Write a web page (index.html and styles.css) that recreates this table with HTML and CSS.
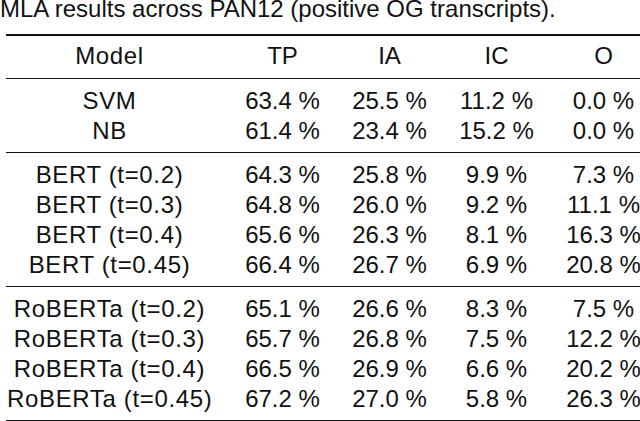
FILE: index.html
```html
<!DOCTYPE html>
<html lang="en">
<head>
<meta charset="utf-8">
<title>MLA results across PAN12</title>
<link rel="stylesheet" href="styles.css">
</head>
<body>
<div class="page">
  <p class="caption">MLA results across PAN12 (positive OG transcripts).</p>
  <table class="results">
    <colgroup>
      <col class="c-model">
      <col class="c-num">
      <col class="c-num">
      <col class="c-num">
      <col class="c-num">
    </colgroup>
    <thead>
      <tr><th class="model">Model</th><th>TP</th><th>IA</th><th>IC</th><th>O</th></tr>
    </thead>
    <tbody>
      <tr><td class="model">SVM</td><td>63.4 %</td><td>25.5 %</td><td>11.2 %</td><td>0.0 %</td></tr>
      <tr><td class="model">NB</td><td>61.4 %</td><td>23.4 %</td><td>15.2 %</td><td>0.0 %</td></tr>
    </tbody>
    <tbody>
      <tr><td class="model">BERT (t=0.2)</td><td>64.3 %</td><td>25.8 %</td><td>9.9 %</td><td>7.3 %</td></tr>
      <tr><td class="model">BERT (t=0.3)</td><td>64.8 %</td><td>26.0 %</td><td>9.2 %</td><td>11.1 %</td></tr>
      <tr><td class="model">BERT (t=0.4)</td><td>65.6 %</td><td>26.3 %</td><td>8.1 %</td><td>16.3 %</td></tr>
      <tr><td class="model">BERT (t=0.45)</td><td>66.4 %</td><td>26.7 %</td><td>6.9 %</td><td>20.8 %</td></tr>
    </tbody>
    <tbody>
      <tr><td class="model">RoBERTa (t=0.2)</td><td>65.1 %</td><td>26.6 %</td><td>8.3 %</td><td>7.5 %</td></tr>
      <tr><td class="model">RoBERTa (t=0.3)</td><td>65.7 %</td><td>26.8 %</td><td>7.5 %</td><td>12.2 %</td></tr>
      <tr><td class="model">RoBERTa (t=0.4)</td><td>66.5 %</td><td>26.9 %</td><td>6.6 %</td><td>20.2 %</td></tr>
      <tr><td class="model">RoBERTa (t=0.45)</td><td>67.2 %</td><td>27.0 %</td><td>5.8 %</td><td>26.3 %</td></tr>
    </tbody>
  </table>
</div>
</body>
</html>
```

FILE: styles.css
```css
html, body {
  margin: 0;
  padding: 0;
  background: #ffffff;
  overflow: hidden;
}

body {
  width: 640px;
  height: 421px;
  font-family: "Liberation Sans", Arial, sans-serif;
  font-size: 24px;
  color: #111111;
}

.page {
  width: 640px;
  height: 421px;
  overflow: hidden;
}

.caption {
  margin: 0;
  line-height: 18px;
  white-space: nowrap;
}

.results {
  margin: 16px 0 0 6px;
  border-collapse: collapse;
  table-layout: fixed;
  width: 651px;
  border-top: 2px solid #111111;
  border-bottom: 2px solid #111111;
}

.c-model {
  width: 223px;
}

.c-num {
  width: 107px;
}

.results th,
.results td {
  padding: 0;
  line-height: 30px;
  font-weight: normal;
  text-align: center;
  white-space: nowrap;
}

.results .model {
  padding-left: 1px;
  padding-right: 17px;
  letter-spacing: 0.65px;
}

.results thead th {
  padding-top: 5px;
  padding-bottom: 7px;
  border-bottom: 1px solid #111111;
}

.results tbody + tbody tr:first-child td {
  border-top: 1px solid #111111;
}

.results tbody tr:first-child td {
  padding-top: 7px;
}

.results tbody tr:last-child td {
  padding-bottom: 6px;
}
```
